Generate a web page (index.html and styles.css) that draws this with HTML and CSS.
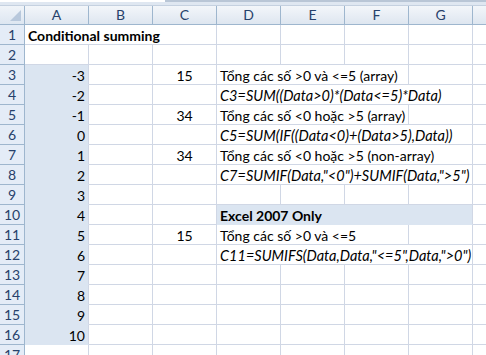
FILE: index.html
```html
<!DOCTYPE html>
<html lang="vi">
<head>
    <meta charset="UTF-8">
    <title>Conditional summing</title>
    <link rel="stylesheet" href="styles.css">
</head>
<body>

<!-- bottom edge of the formula bar -->
<div class="topbar"><div class="topbar-box"></div></div>

<div class="grid">
    <!-- column headers (H is only partly on screen, its letter is off the edge) -->
    <div class="corner"><div class="corner-tri"></div></div>
    <div class="ch">A</div><div class="ch">B</div><div class="ch">C</div><div class="ch">D</div>
    <div class="ch">E</div><div class="ch">F</div><div class="ch">G</div><div class="ch"></div>

    <div class="rh">1</div>
    <div class="c bold span3">Conditional summing</div>
    <div class="c"></div><div class="c"></div><div class="c"></div><div class="c"></div><div class="c"></div>

    <div class="rh">2</div>
    <div class="c"></div><div class="c"></div><div class="c"></div><div class="c"></div>
    <div class="c"></div><div class="c"></div><div class="c"></div><div class="c"></div>

    <div class="rh">3</div>
    <div class="c sel num">-3</div><div class="c"></div><div class="c mid">15</div>
    <div class="c span3">Tổng các số &gt;0 và &lt;=5 (array)</div>
    <div class="c"></div><div class="c"></div>

    <div class="rh">4</div>
    <div class="c sel num">-2</div><div class="c"></div><div class="c"></div>
    <div class="c it span4">C3=SUM((Data&gt;0)*(Data&lt;=5)*Data)</div>
    <div class="c"></div>

    <div class="rh">5</div>
    <div class="c sel num">-1</div><div class="c"></div><div class="c mid">34</div>
    <div class="c span3">Tổng các số &lt;0 hoặc &gt;5 (array)</div>
    <div class="c"></div><div class="c"></div>

    <div class="rh">6</div>
    <div class="c sel num">0</div><div class="c"></div><div class="c"></div>
    <div class="c it span4">C5=SUM(IF((Data&lt;0)+(Data&gt;5),Data))</div>
    <div class="c"></div>

    <div class="rh">7</div>
    <div class="c sel num">1</div><div class="c"></div><div class="c mid">34</div>
    <div class="c span4">Tổng các số &lt;0 hoặc &gt;5 (non-array)</div>
    <div class="c"></div>

    <div class="rh">8</div>
    <div class="c sel num">2</div><div class="c"></div><div class="c"></div>
    <div class="c it span4">C7=SUMIF(Data,"&lt;0")+SUMIF(Data,"&gt;5")</div>
    <div class="c"></div>

    <div class="rh">9</div>
    <div class="c sel num">3</div><div class="c"></div><div class="c"></div><div class="c"></div>
    <div class="c"></div><div class="c"></div><div class="c"></div><div class="c"></div>

    <div class="rh">10</div>
    <div class="c sel num">4</div><div class="c"></div><div class="c"></div>
    <div class="c sel bold span4">Excel 2007 Only</div>
    <div class="c"></div>

    <div class="rh">11</div>
    <div class="c sel num">5</div><div class="c"></div><div class="c mid">15</div>
    <div class="c span3">Tổng các số &gt;0 và &lt;=5</div>
    <div class="c"></div><div class="c"></div>

    <div class="rh">12</div>
    <div class="c sel num">6</div><div class="c"></div><div class="c"></div>
    <div class="c it span4">C11=SUMIFS(Data,Data,"&lt;=5",Data,"&gt;0")</div>
    <div class="c"></div>

    <div class="rh">13</div>
    <div class="c sel num">7</div><div class="c"></div><div class="c"></div><div class="c"></div>
    <div class="c"></div><div class="c"></div><div class="c"></div><div class="c"></div>

    <div class="rh">14</div>
    <div class="c sel num">8</div><div class="c"></div><div class="c"></div><div class="c"></div>
    <div class="c"></div><div class="c"></div><div class="c"></div><div class="c"></div>

    <div class="rh">15</div>
    <div class="c sel num">9</div><div class="c"></div><div class="c"></div><div class="c"></div>
    <div class="c"></div><div class="c"></div><div class="c"></div><div class="c"></div>

    <div class="rh">16</div>
    <div class="c sel num">10</div><div class="c"></div><div class="c"></div><div class="c"></div>
    <div class="c"></div><div class="c"></div><div class="c"></div><div class="c"></div>

    <div class="rh">17</div>
    <div class="c"></div><div class="c"></div><div class="c"></div><div class="c"></div>
    <div class="c"></div><div class="c"></div><div class="c"></div><div class="c"></div>
</div>

</body>
</html>
```

FILE: styles.css
```css
body {
    margin: 0;
    width: 486px;
    height: 355px;
    overflow: hidden;
    background-color: #fff;
    font-family: Lato, "Open Sans", sans-serif;
    font-size: 14px;
    color: #000;
}
.topbar {
    height: 6px;
    box-sizing: border-box;
    background-color: #dfe7f1;
    border-top: 2px solid #fff;
    border-bottom: 1px solid #c5d1e0;
}
.topbar-box {
    margin-left: 165px;
    margin-top: -2px;
    height: 2px;
    background-color: #b9c6d6;
}
.grid {
    display: grid;
    grid-template-columns: 25px repeat(8, 64px);
    grid-template-rows: 19px;
    grid-auto-rows: 20px;
}
.corner {
    background: linear-gradient(#f0f4f9, #dde6f1);
    border-right: 1px solid #9eb6ce;
    border-bottom: 1px solid #9eb6ce;
    box-sizing: border-box;
    display: flex;
    align-items: flex-end;
    justify-content: flex-end;
    padding: 0 3px 3px 0;
}
.corner-tri {
    width: 11px;
    height: 11px;
    background-color: #b8c8dc;
    clip-path: polygon(100% 0, 100% 100%, 0 100%);
}
.ch {
    background: linear-gradient(#f3f6fa, #dee6f0);
    border-right: 1px solid #9eb6ce;
    border-bottom: 1px solid #9eb6ce;
    box-sizing: border-box;
    text-align: center;
    line-height: 18px;
    color: #27416b;
}
.rh {
    background-color: #e4ecf7;
    border-right: 1px solid #9eb6ce;
    border-bottom: 1px solid #9eb6ce;
    box-sizing: border-box;
    text-align: center;
    line-height: 20px;
    color: #27416b;
}
.c {
    border-right: 1px solid #d0d7e5;
    border-bottom: 1px solid #d0d7e5;
    box-sizing: border-box;
    padding: 0 3px;
    line-height: 21px;
    white-space: nowrap;
    overflow: hidden;
}
.sel {
    background-color: #dbe5f1;
    border-bottom-color: #dbe5f1;
}
.num {
    text-align: right;
}
.mid {
    text-align: center;
}
.bold {
    font-weight: bold;
}
.it {
    font-size: 14.5px;
    font-style: italic;
}
.span3 {
    grid-column: span 3;
}
.span4 {
    grid-column: span 4;
}
```
